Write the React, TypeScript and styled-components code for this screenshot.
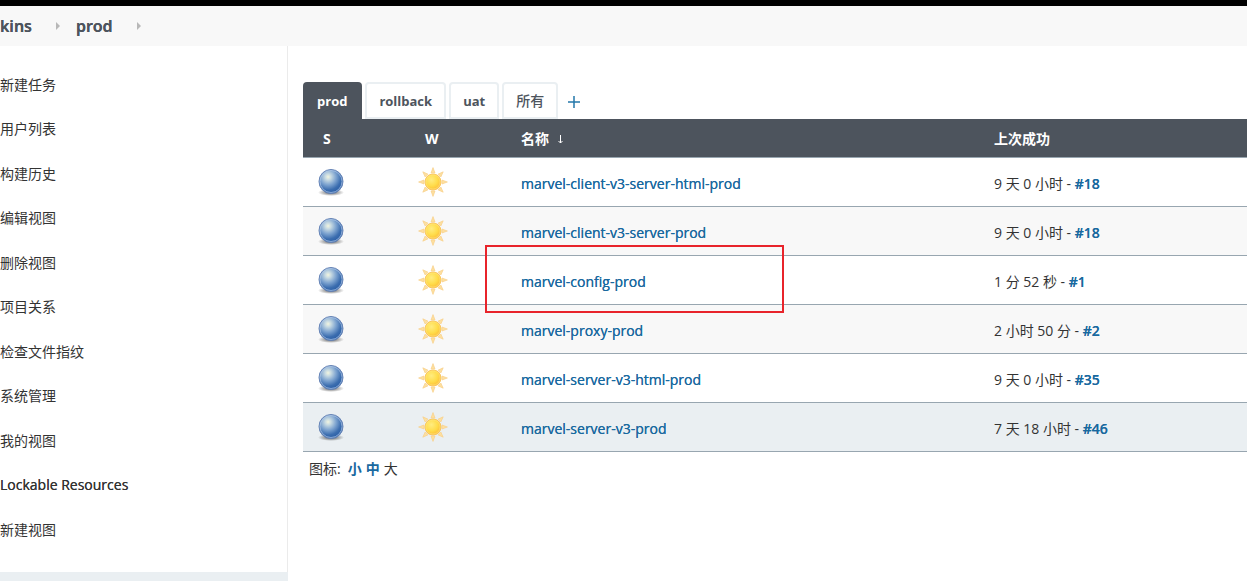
import React from 'react';
import styled, { createGlobalStyle } from 'styled-components';

const GlobalStyle = createGlobalStyle`
  *, *::before, *::after { box-sizing: border-box; }
  html, body, #root { min-height: 100vh; }
  body {
    margin: 0;
    overflow: hidden;
    background: #fff;
    color: #333;
    font-family: 'Open Sans', 'Noto Sans CJK SC', sans-serif;
    font-size: 14px;
    line-height: 20px;
  }
`;

const Page = styled.div`
  display: flex;
  flex-direction: column;
  height: 100vh;
  overflow: hidden;
`;

const TopBar = styled.header`
  flex: none;
  height: 6px;
  background: #000;
`;

const Breadcrumbs = styled.nav`
  flex: none;
  display: flex;
  align-items: center;
  height: 40px;
  background: #f8f8f8;
`;

const Crumb = styled.a<{ $clipped?: boolean }>`
  display: flex;
  justify-content: flex-end;
  width: ${(p) => (p.$clipped ? '32px' : 'auto')};
  overflow: hidden;
  color: #4d545d;
  font-family: 'Noto Sans', sans-serif;
  font-size: 16px;
  line-height: 24px;
  font-weight: 600;
  text-decoration: none;
  text-shadow: 0 0 0 currentColor;
`;

const Separator = styled.svg`
  width: 4px;
  height: 8px;
  margin: 0 16px 0 24px;
  fill: #b8b8b8;
`;

const Body = styled.div`
  flex: 1;
  display: flex;
  min-height: 0;
`;

const Sidebar = styled.aside`
  flex: none;
  display: flex;
  flex-direction: column;
  width: 288px;
`;

const Tasks = styled.ul`
  flex: none;
  margin: 0;
  padding: 17px 0 20px;
  list-style: none;
  border-right: 1px solid #ebebeb;
`;

const Task = styled.li`
  height: 44px;
  padding-top: 12px;

  &:nth-child(even) { height: 45px; }
`;

const TaskLink = styled.a`
  color: #333;
  text-decoration: none;

  &:lang(en) { text-shadow: 0 0 0 currentColor; }
`;

const Executors = styled.div`
  flex: 1;
  background: #eaeff2;
`;

const Main = styled.main`
  flex: 1;
  min-width: 0;
  padding: 36px 0 0 15px;
`;

const Tabs = styled.nav`
  display: flex;
  gap: 3px;
  height: 37px;
`;

const Tab = styled.a<{ $active?: boolean }>`
  display: flex;
  align-items: center;
  height: 37px;
  padding: 0 ${(p) => (p.$active ? '15px 0 14px' : '12px')};
  border: ${(p) => (p.$active ? '0' : '2px solid #eaeff2')};
  border-radius: 4px 4px 0 0;
  background: ${(p) => (p.$active ? '#4d545d' : '#fff')};
  color: ${(p) => (p.$active ? '#fff' : '#4d545d')};
  font-size: 13px;
  font-weight: 700;
  text-decoration: none;

  &:lang(zh) { font-size: 14px; font-weight: 500; }
`;

const AddTab = styled.a`
  display: flex;
  align-items: center;
  height: 40px;
  padding-left: 7px;
`;

const Jobs = styled.table`
  width: 100%;
  table-layout: fixed;
  border-collapse: separate;
  border-spacing: 0;
`;

const Column = styled.col<{ $width?: number }>`
  width: ${(p) => (p.$width ? `${p.$width}px` : 'auto')};
`;

const HeadCell = styled.th<{ $pad?: number }>`
  height: 39px;
  padding: 2px 0 0 ${(p) => p.$pad ?? 15}px;
  border-bottom: 1px solid #98a6b0;
  background: #4d545d;
  color: #fff;
  font-weight: 700;
  text-align: left;
`;

const SortArrow = styled.svg`
  width: 7px;
  height: 9px;
  margin-left: 8px;
  fill: none;
  stroke: #fff;
`;

const JobRow = styled.tr`
  &:nth-child(even) { background: #f8f8f8; }
  &:last-child { background: #eaeff2; }
`;

const Cell = styled.td`
  position: relative;
  height: 49px;
  padding: 3px 0 0 15px;
  border-bottom: 1px solid #98a6b0;
`;

const IconCell = styled(Cell)`
  padding: 0 0 0 12px;

  svg { display: block; }
`;

const JobLink = styled.a`
  color: #19699f;
  text-decoration: none;
  text-shadow: 0 0 0 currentColor;
`;

const BuildLink = styled(JobLink)`
  font-family: 'Noto Sans', sans-serif;
  font-weight: 500;
`;

const SizeLink = styled(JobLink)`
  font-weight: 700;
  text-shadow: none;
`;

const Highlight = styled.span`
  position: absolute;
  z-index: 1;
  top: -11px;
  left: -21px;
  width: 299px;
  height: 68px;
  border: 2px solid #e8242b;
  pointer-events: none;
`;

const IconSizes = styled.div`
  display: flex;
  gap: 4px;
  padding: 7px 6px;
`;

const SizeLabel = styled.span`
  margin-right: 3px;
`;

const GradientDefs = styled.svg`
  position: absolute;
`;

const Gradients = () => (
  <GradientDefs width="0" height="0" aria-hidden="true">
    <defs>
      <radialGradient id="ball" cx="38%" cy="31%" r="66%">
        <stop offset="0" stopColor="#f1f4df" />
        <stop offset="0.18" stopColor="#c9dbe2" />
        <stop offset="0.5" stopColor="#7ea4d0" />
        <stop offset="0.82" stopColor="#3b6daf" />
        <stop offset="1" stopColor="#2f62a8" />
      </radialGradient>
      <radialGradient id="shade">
        <stop offset="0.4" stopColor="#000" stopOpacity="0.4" />
        <stop offset="1" stopColor="#000" stopOpacity="0" />
      </radialGradient>
      <radialGradient id="sun" cx="40%" cy="36%" r="65%">
        <stop offset="0" stopColor="#ffec80" />
        <stop offset="0.6" stopColor="#ffdc4a" />
        <stop offset="1" stopColor="#fdbd38" />
      </radialGradient>
    </defs>
  </GradientDefs>
);

const Ball = () => (
  <svg width="32" height="32" viewBox="0 0 32 32" role="img" aria-label="成功">
    <ellipse cx="16" cy="26.5" rx="13" ry="3.5" fill="url(#shade)" />
    <circle cx="16" cy="15.5" r="12" fill="url(#ball)" stroke="#6683b5" />
    <circle cx="16" cy="15.5" r="11" fill="none" stroke="#b4cbea" strokeOpacity="0.65" />
  </svg>
);

const Sun = () => (
  <svg width="32" height="32" viewBox="0 0 32 32" role="img" aria-label="健康">
    {[0, 45, 90, 135, 180, 225, 270, 315].map((angle) => (
      <path
        key={angle}
        d="M14 7 16 1.6 18 7Z"
        transform={`rotate(${angle} 16 16)`}
        fill="#fde0a0"
        stroke="#f8d08a"
        strokeWidth="0.7"
      />
    ))}
    <circle cx="16" cy="16" r="8" fill="url(#sun)" stroke="#f8c058" strokeWidth="0.9" />
    <circle cx="16" cy="16" r="7.1" fill="none" stroke="#ffe784" strokeOpacity="0.6" />
  </svg>
);

const Chevron = () => (
  <Separator viewBox="0 0 4 8" aria-hidden="true">
    <path d="M0 0 4 4 0 8Z" />
  </Separator>
);

const tasks = [
  '新建任务', '用户列表', '构建历史', '编辑视图', '删除视图', '项目关系',
  '检查文件指纹', '系统管理', '我的视图', 'Lockable Resources', '新建视图',
];

const tabs = ['prod', 'rollback', 'uat', '所有'];

const jobs = [
  { name: 'marvel-client-v3-server-html-prod', since: '9 天 0 小时', build: '#18' },
  { name: 'marvel-client-v3-server-prod', since: '9 天 0 小时', build: '#18' },
  { name: 'marvel-config-prod', since: '1 分 52 秒', build: '#1', marked: true },
  { name: 'marvel-proxy-prod', since: '2 小时 50 分', build: '#2' },
  { name: 'marvel-server-v3-html-prod', since: '9 天 0 小时', build: '#35' },
  { name: 'marvel-server-v3-prod', since: '7 天 18 小时', build: '#46' },
];

const langOf = (text: string) => (/^[\x20-\x7e]+$/.test(text) ? 'en' : 'zh');

export default function App() {
  return (
    <Page>
      <GlobalStyle />
      <Gradients />
      <TopBar />
      <Breadcrumbs>
        <Crumb href="#jenkins" $clipped>Jenkins</Crumb>
        <Chevron />
        <Crumb href="#prod">prod</Crumb>
        <Chevron />
      </Breadcrumbs>
      <Body>
        <Sidebar>
          <Tasks>
            {tasks.map((task) => (
              <Task key={task}>
                <TaskLink href="#task" lang={langOf(task)}>{task}</TaskLink>
              </Task>
            ))}
          </Tasks>
          <Executors />
        </Sidebar>
        <Main>
          <Tabs>
            {tabs.map((tab, i) => (
              <Tab key={tab} href="#view" lang={langOf(tab)} $active={i === 0}>{tab}</Tab>
            ))}
            <AddTab href="#new-view" aria-label="新建视图">
              <svg width="12" height="12" viewBox="0 0 12 12" fill="none" stroke="#2478aa" strokeWidth="1.5">
                <path d="M6 0V12M0 6H12" />
              </svg>
            </AddTab>
          </Tabs>
          <Jobs>
            <colgroup>
              <Column $width={102} />
              <Column $width={101} />
              <Column $width={473} />
              <Column />
            </colgroup>
            <thead>
              <tr>
                <HeadCell $pad={20}>S</HeadCell>
                <HeadCell $pad={20}>W</HeadCell>
                <HeadCell>
                  名称
                  <SortArrow viewBox="0 0 7 9" aria-hidden="true">
                    <path d="M3.5 0V8M1.5 6 3.5 8 5.5 6" />
                  </SortArrow>
                </HeadCell>
                <HeadCell>上次成功</HeadCell>
              </tr>
            </thead>
            <tbody>
              {jobs.map((job) => (
                <JobRow key={job.name}>
                  <IconCell><Ball /></IconCell>
                  <IconCell><Sun /></IconCell>
                  <Cell>
                    <JobLink href="#job">{job.name}</JobLink>
                    {job.marked && <Highlight />}
                  </Cell>
                  <Cell>
                    {job.since} - <BuildLink href="#build">{job.build}</BuildLink>
                  </Cell>
                </JobRow>
              ))}
            </tbody>
          </Jobs>
          <IconSizes>
            <SizeLabel>图标:</SizeLabel>
            <SizeLink href="#small">小</SizeLink>
            <SizeLink href="#medium">中</SizeLink>
            <span>大</span>
          </IconSizes>
        </Main>
      </Body>
    </Page>
  );
}
